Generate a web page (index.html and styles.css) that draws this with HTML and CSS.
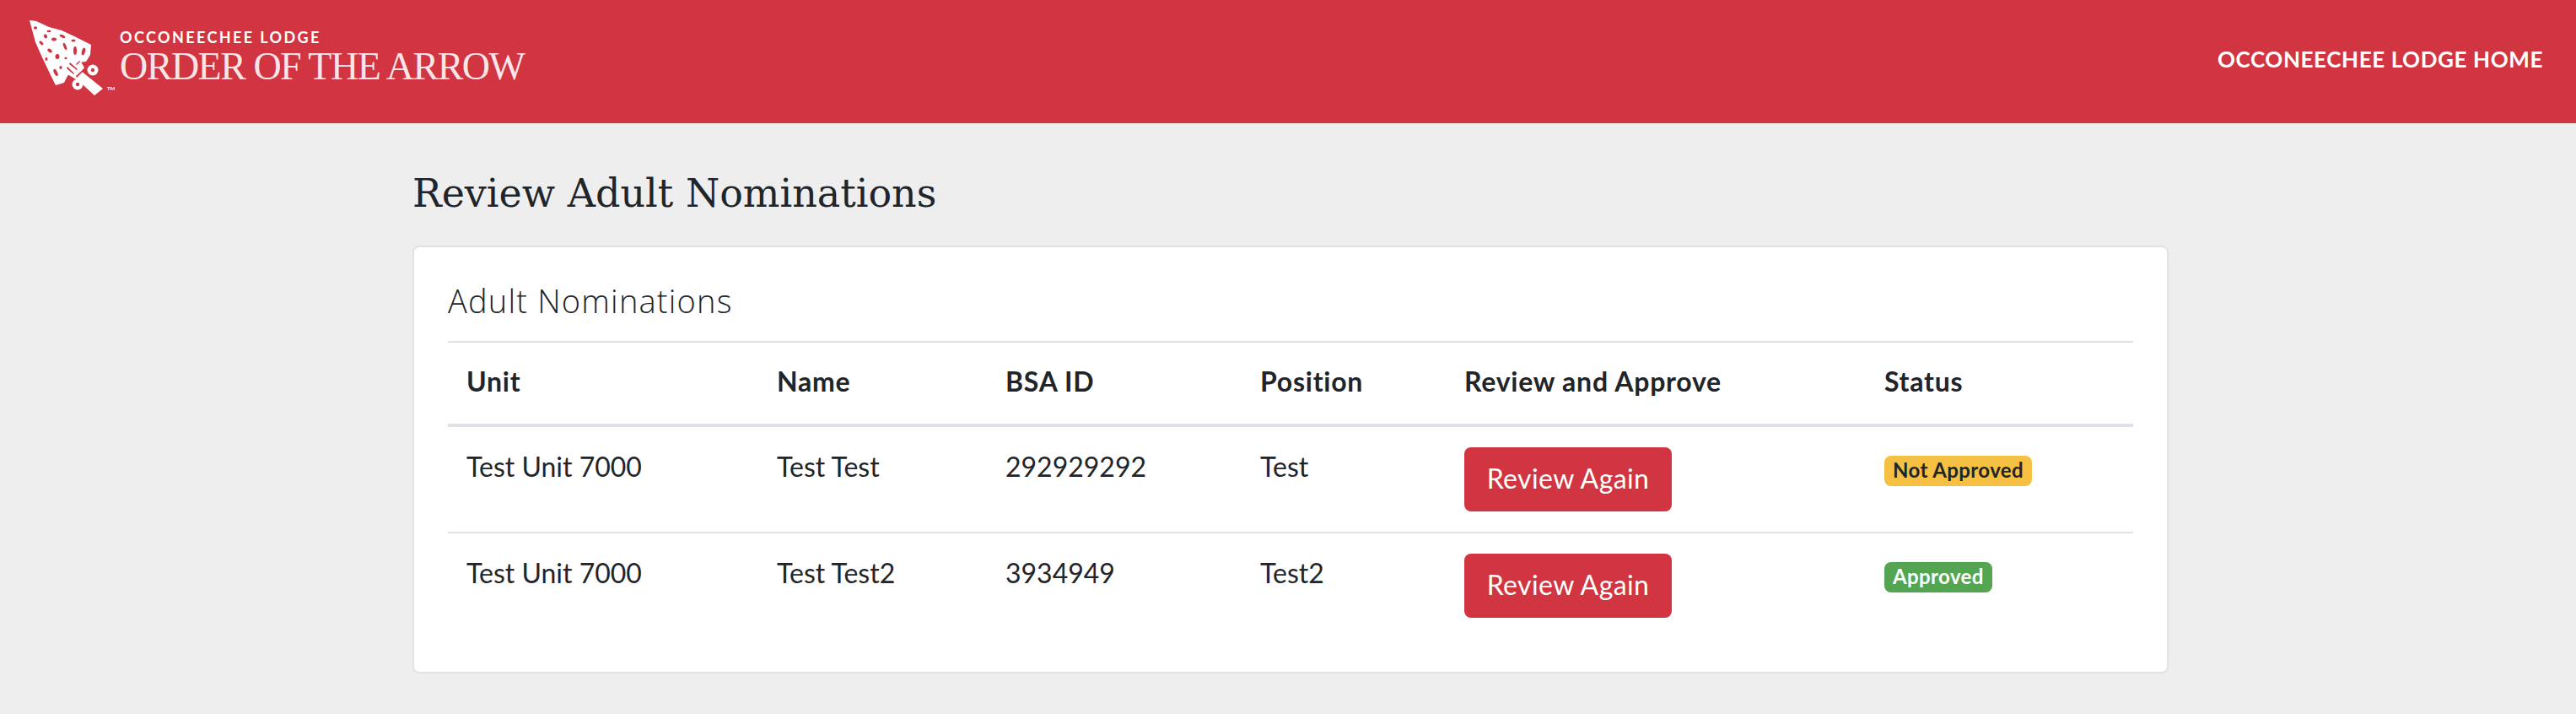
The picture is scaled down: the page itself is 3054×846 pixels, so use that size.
FILE: index.html

```html
<!DOCTYPE html>
<html lang="en">
<head>
    <meta charset="UTF-8">
    <title>Review Adult Nominations</title>
    <link rel="stylesheet" href="styles.css">
</head>
<body>
    <header class="topbar">
        <a class="brand" href="#">
            <svg class="brand-mark" viewBox="0 0 130 110" width="130" height="110">
                <g fill="#fff">
                    <path d="M15 14 L23 15 L38 22 L53 26 L68 33 L88 43 L87 55 L82 63 L74 64 L64 76 L60 80 L56 88 L46 91 L40 79 L30 58 L22 40 Z"/>
                    <path d="M76 74 L102 95 L92 103 L69 82 Z"/>
                    <path d="M60 64 L72 57 L80 70 L70 84 L60 78 Z"/>
                    <circle cx="90" cy="73" r="6.500"/>
                    <circle cx="72" cy="90" r="6.500"/>
                </g>
                <g fill="#d13541">
                    <ellipse cx="22" cy="23" rx="2.200" ry="1.800"/>
                    <ellipse cx="38" cy="27" rx="2.500" ry="1.300"/>
                    <ellipse cx="34" cy="33" rx="2" ry="2.500" transform="rotate(-30 34 33)"/>
                    <ellipse cx="44" cy="36.500" rx="3" ry="2"/>
                    <ellipse cx="54" cy="33" rx="3.500" ry="1.600" transform="rotate(25 54 33)"/>
                    <ellipse cx="67" cy="38" rx="2.500" ry="1.600"/>
                    <ellipse cx="29" cy="41" rx="3" ry="1.600" transform="rotate(40 29 41)"/>
                    <ellipse cx="39" cy="50" rx="3" ry="2" transform="rotate(40 39 50)"/>
                    <ellipse cx="57" cy="45" rx="1.600" ry="4.500" transform="rotate(-20 57 45)"/>
                    <ellipse cx="69" cy="50" rx="2" ry="5"/>
                    <ellipse cx="79" cy="51" rx="2" ry="4.500" transform="rotate(15 79 51)"/>
                    <ellipse cx="48" cy="57" rx="2.500" ry="3"/>
                    <ellipse cx="35" cy="60" rx="1.600" ry="2"/>
                    <ellipse cx="52" cy="70" rx="1.600" ry="2"/>
                    <ellipse cx="46" cy="76" rx="2" ry="4.500" transform="rotate(-25 46 76)"/>
                    <ellipse cx="58" cy="59" rx="1.600" ry="1.200"/>
                    <circle cx="90" cy="73" r="2.200"/>
                    <circle cx="72" cy="90" r="2.200"/>
                    <path d="M63 64 L72 72 L71 73 L62 66 Z"/>
                    <path d="M60 69 L68 77 L67 78 L59 71 Z"/>
                    <path d="M70 66 L74 62 L75 63 L71 67 Z"/>
                    <path d="M70 80 L80 71 L81 72 L71 82 Z"/>
                </g>
            </svg>
            <span class="brand-tm">TM</span>
            <span class="brand-text">
                <span class="brand-lodge">OCCONEECHEE LODGE</span>
                <span class="brand-name">ORDER OF THE ARROW</span>
            </span>
        </a>
        <a class="home-link" href="#">OCCONEECHEE LODGE HOME</a>
    </header>

    <main class="content">
        <h1 class="page-title">Review Adult Nominations</h1>
        <section class="card">
            <h2 class="card-title">Adult Nominations</h2>
            <table class="noms">
                <thead>
                    <tr>
                        <th class="col-unit">Unit</th>
                        <th class="col-name">Name</th>
                        <th class="col-id">BSA ID</th>
                        <th class="col-pos">Position</th>
                        <th class="col-review">Review and Approve</th>
                        <th>Status</th>
                    </tr>
                </thead>
                <tbody>
                    <tr>
                        <td class="cell-tight">Test Unit 7000</td>
                        <td class="cell-tight">Test Test</td>
                        <td>292929292</td>
                        <td>Test</td>
                        <td class="cell-action"><button class="btn">Review Again</button></td>
                        <td class="cell-action"><span class="badge badge-warn">Not Approved</span></td>
                    </tr>
                    <tr>
                        <td class="cell-tight">Test Unit 7000</td>
                        <td class="cell-tight">Test Test2</td>
                        <td>3934949</td>
                        <td>Test2</td>
                        <td class="cell-action"><button class="btn">Review Again</button></td>
                        <td class="cell-action"><span class="badge badge-ok">Approved</span></td>
                    </tr>
                </tbody>
            </table>
        </section>
    </main>
</body>
</html>
```

FILE: styles.css

```css
body {
    margin: 0;
    background-color: #eeeeee;
    color: #212529;
    font-family: 'Lato', sans-serif;
    font-size: 32px;
    line-height: 48px;
}

.topbar {
    height: 146px;
    background-color: #d13541;
    display: flex;
    justify-content: space-between;
    align-items: center;
    padding: 0 39px 0 20px;
    color: white;
}

.brand {
    display: flex;
    align-items: flex-start;
    height: 146px;
    position: relative;
    color: white;
    text-decoration: none;
}

.brand-mark {
    display: block;
    margin-top: 10px;
    margin-right: -8px;
}

.brand-tm {
    position: absolute;
    left: 107px;
    top: 101px;
    font-size: 6px;
    line-height: 8px;
    font-weight: 700;
}

.brand-text {
    display: flex;
    flex-direction: column;
    padding-top: 32px;
}

.brand-lodge {
    font-size: 18px;
    line-height: 24px;
    letter-spacing: 2.4px;
    font-weight: 700;
}

.brand-name {
    font-family: 'Liberation Serif', serif;
    font-size: 46px;
    line-height: 46px;
    letter-spacing: -1.5px;
    color: rgba(255, 255, 255, 0.9);
}

.home-link {
    color: white;
    text-decoration: none;
    font-size: 26px;
    font-weight: 700;
    line-height: 36px;
    letter-spacing: 0.6px;
    margin-bottom: 6px;
}

.content {
    padding: 0 483px 0 489px;
}

.page-title {
    margin: 0;
    padding: 50px 0 28px;
    font-family: 'DejaVu Serif', serif;
    font-size: 46px;
    line-height: 67px;
    font-weight: 400;
}

.card {
    background-color: white;
    border: 2px solid #e2e2e2;
    border-radius: 8px;
    padding: 40px;
}

.card-title {
    margin: 0;
    padding-bottom: 25px;
    font-family: 'Open Sans', sans-serif;
    font-size: 38px;
    line-height: 46px;
    font-weight: 300;
    letter-spacing: 1.2px;
}

.noms {
    width: 100%;
    border-collapse: collapse;
    table-layout: fixed;
}

.noms th,
.noms td {
    padding: 23px 24px 25px;
    text-align: left;
    vertical-align: top;
    border-top: 2px solid #dee2e6;
}

.noms th {
    padding-top: 22px;
    padding-bottom: 26px;
    font-weight: 700;
    letter-spacing: 0.75px;
    border-bottom: 4px solid #dee2e6;
}

.noms .cell-action {
    padding: 24px;
}

.noms .cell-tight,
.noms .col-unit,
.noms .col-name {
    padding-left: 22px;
    padding-right: 26px;
}

.noms tbody tr:first-child td {
    border-top: none;
}

.col-unit { width: 320px; }
.col-name { width: 221px; }
.col-id { width: 254px; }
.col-pos { width: 194px; }
.col-review { width: 450px; }

.btn {
    display: block;
    width: 246px;
    height: 76px;
    background-color: #d13541;
    color: white;
    border: none;
    border-radius: 8px;
    font-family: inherit;
    font-size: 32px;
    letter-spacing: 0.4px;
    padding: 0 0 4px;
}

.badge {
    display: inline-block;
    height: 36px;
    line-height: 34px;
    padding: 0 10px;
    border-radius: 8px;
    font-size: 24px;
    font-weight: 700;
    letter-spacing: 0.4px;
    vertical-align: middle;
}

.badge-warn {
    background-color: #f6c142;
    color: #212529;
}

.badge-ok {
    background-color: #53a551;
    color: white;
}
```
